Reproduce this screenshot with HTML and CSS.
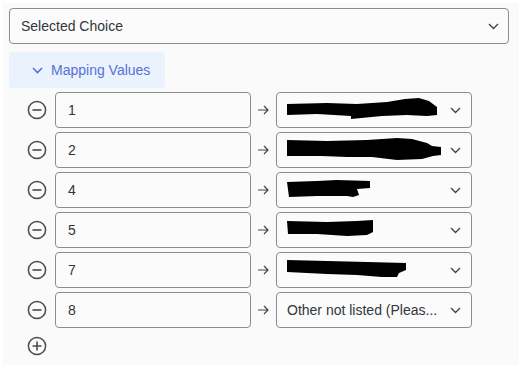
FILE: index.html
```html
<!DOCTYPE html>
<html>
<head>
<meta charset="utf-8">
<link rel="stylesheet" href="styles.css">
</head>
<body>
<div class="panel">
  <div class="select top-select">
    <span class="label">Selected Choice</span>
    <svg class="chev" width="11" height="7" viewBox="0 0 11 7"><path d="M1 1l4.5 4.5L10 1" fill="none" stroke="#444" stroke-width="1.4"/></svg>
  </div>
  <button class="toggle">
    <svg class="tchev" width="11" height="7" viewBox="0 0 11 7"><path d="M1 1l4.5 4.5L10 1" fill="none" stroke="#5870d6" stroke-width="1.6"/></svg>
    <span>Mapping Values</span>
  </button>
  <div class="rows">
    <div class="row">
      <svg class="icon" width="20" height="20" viewBox="0 0 20 20"><circle cx="10" cy="10" r="8.6" fill="none" stroke="#4a4a4a" stroke-width="1.5"/><path d="M5.5 10h9" stroke="#4a4a4a" stroke-width="1.6"/></svg>
      <div class="field">1</div>
      <svg class="arrow" width="11" height="10" viewBox="0 0 11 10"><path d="M0 5h10M6 1l4 4-4 4" fill="none" stroke="#444" stroke-width="1.2"/></svg>
      <div class="select map">
        <svg class="blot" width="152" height="24" viewBox="0 0 152 24"><path d="M0 6 L40 5 L70 6 L100 4 L118 1 L132 0 L142 3 L150 9 L150 17 L140 18 L120 17 L95 18 L64 21 L64 18 L30 16 L0 17 Z" fill="#000"/></svg>
        <svg class="chev" width="11" height="7" viewBox="0 0 11 7"><path d="M1 1l4.5 4.5L10 1" fill="none" stroke="#444" stroke-width="1.4"/></svg>
      </div>
    </div>
    <div class="row">
      <svg class="icon" width="20" height="20" viewBox="0 0 20 20"><circle cx="10" cy="10" r="8.6" fill="none" stroke="#4a4a4a" stroke-width="1.5"/><path d="M5.5 10h9" stroke="#4a4a4a" stroke-width="1.6"/></svg>
      <div class="field">2</div>
      <svg class="arrow" width="11" height="10" viewBox="0 0 11 10"><path d="M0 5h10M6 1l4 4-4 4" fill="none" stroke="#444" stroke-width="1.2"/></svg>
      <div class="select map">
        <svg class="blot" width="154" height="24" viewBox="0 0 154 24"><path d="M0 2 L40 3 L80 2 L110 0 L125 1 L140 5 L145 8 L154 9 L154 17 L146 18 L135 21 L110 22 L85 19 L60 19 L35 18 L0 18 Z" fill="#000"/></svg>
        <svg class="chev" width="11" height="7" viewBox="0 0 11 7"><path d="M1 1l4.5 4.5L10 1" fill="none" stroke="#444" stroke-width="1.4"/></svg>
      </div>
    </div>
    <div class="row">
      <svg class="icon" width="20" height="20" viewBox="0 0 20 20"><circle cx="10" cy="10" r="8.6" fill="none" stroke="#4a4a4a" stroke-width="1.5"/><path d="M5.5 10h9" stroke="#4a4a4a" stroke-width="1.6"/></svg>
      <div class="field">4</div>
      <svg class="arrow" width="11" height="10" viewBox="0 0 11 10"><path d="M0 5h10M6 1l4 4-4 4" fill="none" stroke="#444" stroke-width="1.2"/></svg>
      <div class="select map">
        <svg class="blot" width="84" height="20" viewBox="0 0 84 20"><path d="M0 2 L30 1 L50 0 L83 1 L83 8 L70 9 L72 15 L66 17 L60 16 L30 16 L2 17 Z" fill="#000"/></svg>
        <svg class="chev" width="11" height="7" viewBox="0 0 11 7"><path d="M1 1l4.5 4.5L10 1" fill="none" stroke="#444" stroke-width="1.4"/></svg>
      </div>
    </div>
    <div class="row">
      <svg class="icon" width="20" height="20" viewBox="0 0 20 20"><circle cx="10" cy="10" r="8.6" fill="none" stroke="#4a4a4a" stroke-width="1.5"/><path d="M5.5 10h9" stroke="#4a4a4a" stroke-width="1.6"/></svg>
      <div class="field">5</div>
      <svg class="arrow" width="11" height="10" viewBox="0 0 11 10"><path d="M0 5h10M6 1l4 4-4 4" fill="none" stroke="#444" stroke-width="1.2"/></svg>
      <div class="select map">
        <svg class="blot" width="87" height="20" viewBox="0 0 87 20"><path d="M0 1 L40 2 L70 1 L86 0 L86 12 L80 15 L60 16 L30 14 L1 14 Z" fill="#000"/></svg>
        <svg class="chev" width="11" height="7" viewBox="0 0 11 7"><path d="M1 1l4.5 4.5L10 1" fill="none" stroke="#444" stroke-width="1.4"/></svg>
      </div>
    </div>
    <div class="row">
      <svg class="icon" width="20" height="20" viewBox="0 0 20 20"><circle cx="10" cy="10" r="8.6" fill="none" stroke="#4a4a4a" stroke-width="1.5"/><path d="M5.5 10h9" stroke="#4a4a4a" stroke-width="1.6"/></svg>
      <div class="field">7</div>
      <svg class="arrow" width="11" height="10" viewBox="0 0 11 10"><path d="M0 5h10M6 1l4 4-4 4" fill="none" stroke="#444" stroke-width="1.2"/></svg>
      <div class="select map">
        <svg class="blot" width="120" height="22" viewBox="0 0 120 22"><path d="M0 1 L40 2 L80 3 L119 4 L119 11 L112 14 L110 18 L95 18 L70 16 L40 15 L0 13 Z" fill="#000"/></svg>
        <svg class="chev" width="11" height="7" viewBox="0 0 11 7"><path d="M1 1l4.5 4.5L10 1" fill="none" stroke="#444" stroke-width="1.4"/></svg>
      </div>
    </div>
    <div class="row">
      <svg class="icon" width="20" height="20" viewBox="0 0 20 20"><circle cx="10" cy="10" r="8.6" fill="none" stroke="#4a4a4a" stroke-width="1.5"/><path d="M5.5 10h9" stroke="#4a4a4a" stroke-width="1.6"/></svg>
      <div class="field">8</div>
      <svg class="arrow" width="11" height="10" viewBox="0 0 11 10"><path d="M0 5h10M6 1l4 4-4 4" fill="none" stroke="#444" stroke-width="1.2"/></svg>
      <div class="select map">
        <span class="label">Other not listed (Pleas...</span>
        <svg class="chev" width="11" height="7" viewBox="0 0 11 7"><path d="M1 1l4.5 4.5L10 1" fill="none" stroke="#444" stroke-width="1.4"/></svg>
      </div>
    </div>
  </div>
  <div class="add">
    <svg class="icon" width="20" height="20" viewBox="0 0 20 20"><circle cx="10" cy="10" r="8.6" fill="none" stroke="#4a4a4a" stroke-width="1.5"/><path d="M5.5 10h9M10 5.5v9" stroke="#4a4a4a" stroke-width="1.6"/></svg>
  </div>
</div>
</body>
</html>
```

FILE: styles.css
```css
html, body {
  margin: 0;
  padding: 0;
  background: #ffffff;
}
body {
  font-family: "Liberation Sans", Arial, sans-serif;
  font-size: 14px;
  color: #32363a;
}
.panel {
  margin: 3px 2px 0 3px;
  background: #fafafa;
  padding: 5px 6px 0 6px;
  height: 362px;
  box-sizing: border-box;
}
.select {
  display: flex;
  align-items: center;
  justify-content: space-between;
  box-sizing: border-box;
  height: 36px;
  border: 1px solid #8d8d8d;
  border-radius: 4px;
  background: #fbfbfb;
}
.top-select {
  width: 500px;
  padding: 0 9px 0 11px;
}
.toggle {
  display: flex;
  align-items: center;
  gap: 8px;
  margin-top: 8px;
  width: 156px;
  height: 36px;
  border: none;
  border-radius: 4px;
  background: #eaf3fd;
  padding: 0 0 0 23px;
  font-family: inherit;
  font-size: 14px;
  color: #5870d6;
}
.rows {
  display: flex;
  flex-direction: column;
  gap: 4px;
  margin-top: 4px;
}
.row {
  display: flex;
  align-items: center;
  padding-left: 18px;
}
.icon {
  flex: none;
  display: block;
}
.field {
  box-sizing: border-box;
  margin-left: 8px;
  width: 196px;
  height: 36px;
  border: 1px solid #8d8d8d;
  border-radius: 4px;
  background: #fbfbfb;
  display: flex;
  align-items: center;
  padding-left: 12px;
}
.arrow {
  margin: 0 7px 0 7px;
  flex: none;
}
.map {
  width: 196px;
  padding: 0 10px 0 10px;
}
.map .blot {
  flex: none;
}
.label {
  white-space: nowrap;
}
.add {
  margin-top: 8px;
  padding-left: 18px;
}
```
